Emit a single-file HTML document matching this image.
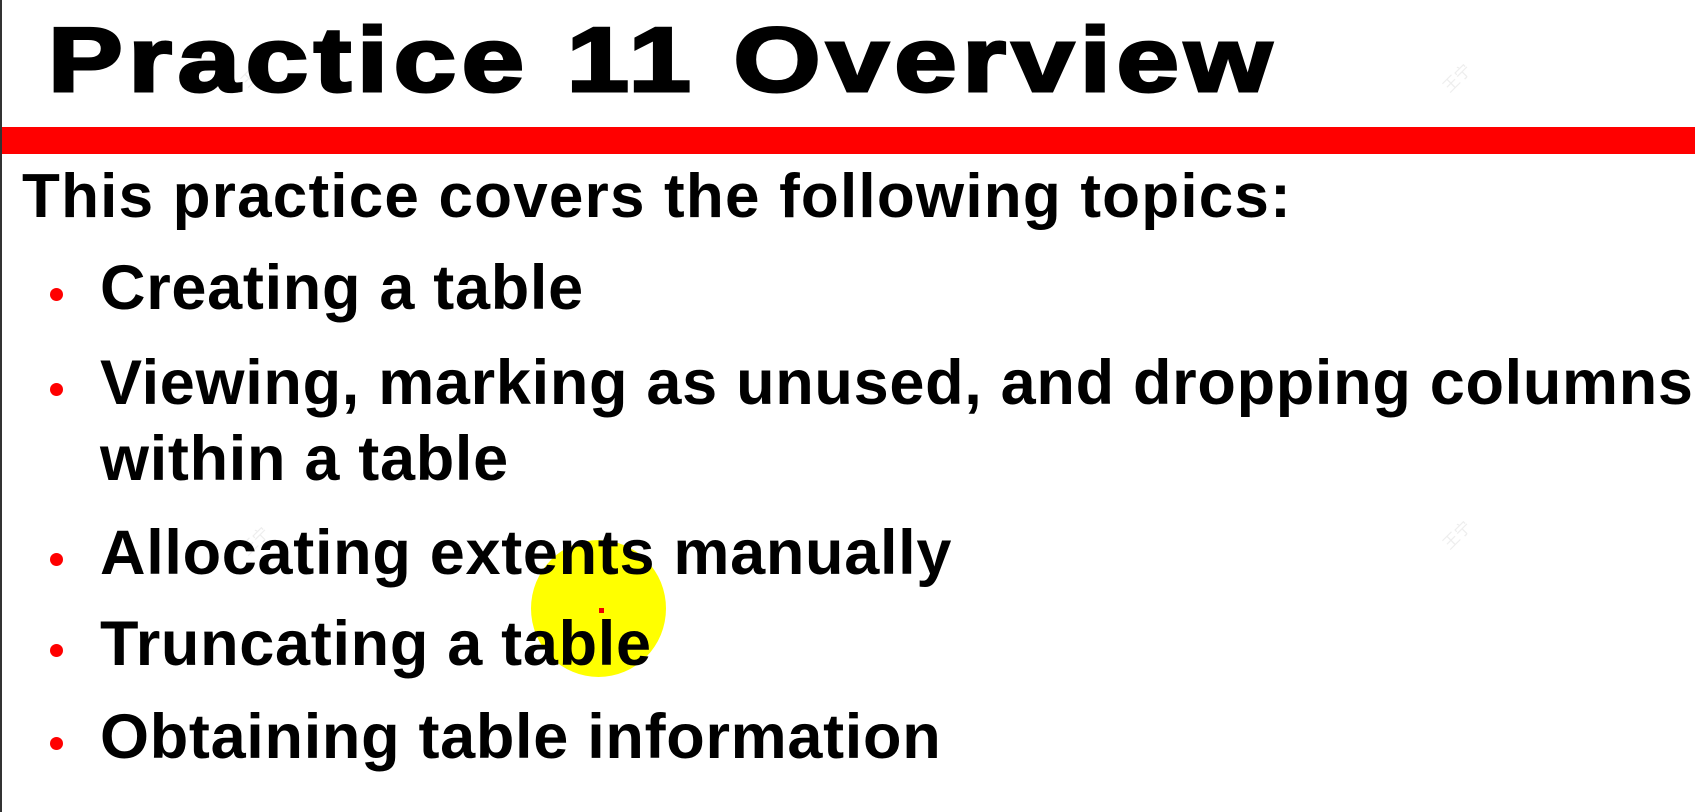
<!DOCTYPE html>
<html><head><meta charset="utf-8"><style>
html,body{margin:0;padding:0;width:1695px;height:812px;background:#fff;overflow:hidden;position:relative;font-family:"Liberation Sans",Arial,sans-serif;font-weight:bold;color:#000}
.lb{position:absolute;left:0;top:0;width:2px;height:812px;background:#333}
.t{position:absolute;white-space:nowrap;line-height:1}
.b{letter-spacing:0.7px}
.bar{position:absolute;left:2px;top:127px;width:1693px;height:27px;background:#f00}
.dot{position:absolute;width:13px;height:13px;border-radius:50%;background:#f00}
.y{position:absolute;left:531px;top:540px;width:135px;height:137px;border-radius:50%;background:#ff0}
.wm{position:absolute;color:#eee;font-size:16px;font-weight:normal;transform:rotate(-45deg);font-family:"Noto Sans CJK SC",sans-serif}
</style></head><body>
<div class="lb"></div>
<div class="y"></div>
<div style="position:absolute;left:599px;top:608px;width:5px;height:5px;background:#e00"></div>
<div class="wm" style="left:238px;top:60px">王宁</div>
<div class="wm" style="left:1440px;top:65px">王宁</div>
<div class="wm" style="left:238px;top:528px">王宁</div>
<div class="wm" style="left:1440px;top:522px">王宁</div>
<div class="t" style="left:48px;top:15px;font-size:91px;letter-spacing:4.7px;transform:scaleX(1.23);transform-origin:0 0;-webkit-text-stroke:3px #000">Practice 11 Overview</div>
<div class="bar"></div>
<div class="t" style="left:22px;top:166px;font-size:62px;letter-spacing:1.2px">This practice covers the following topics:</div>
<div class="dot" style="left:50px;top:288px"></div>
<div class="t b" style="left:100px;top:257px;font-size:63px">Creating a table</div>
<div class="dot" style="left:50px;top:383px"></div>
<div class="t b" style="left:100px;top:352px;font-size:63px">Viewing, marking as unused, and dropping columns</div>
<div class="t b" style="left:100px;top:428px;font-size:63px">within a table</div>
<div class="dot" style="left:50px;top:553px"></div>
<div class="t b" style="left:100px;top:522px;font-size:63px">Allocating extents manually</div>
<div class="dot" style="left:50px;top:644px"></div>
<div class="t b" style="left:100px;top:613px;font-size:63px">Truncating a table</div>
<div class="dot" style="left:50px;top:737px"></div>
<div class="t b" style="left:100px;top:706px;font-size:63px">Obtaining table information</div>
</body></html>
